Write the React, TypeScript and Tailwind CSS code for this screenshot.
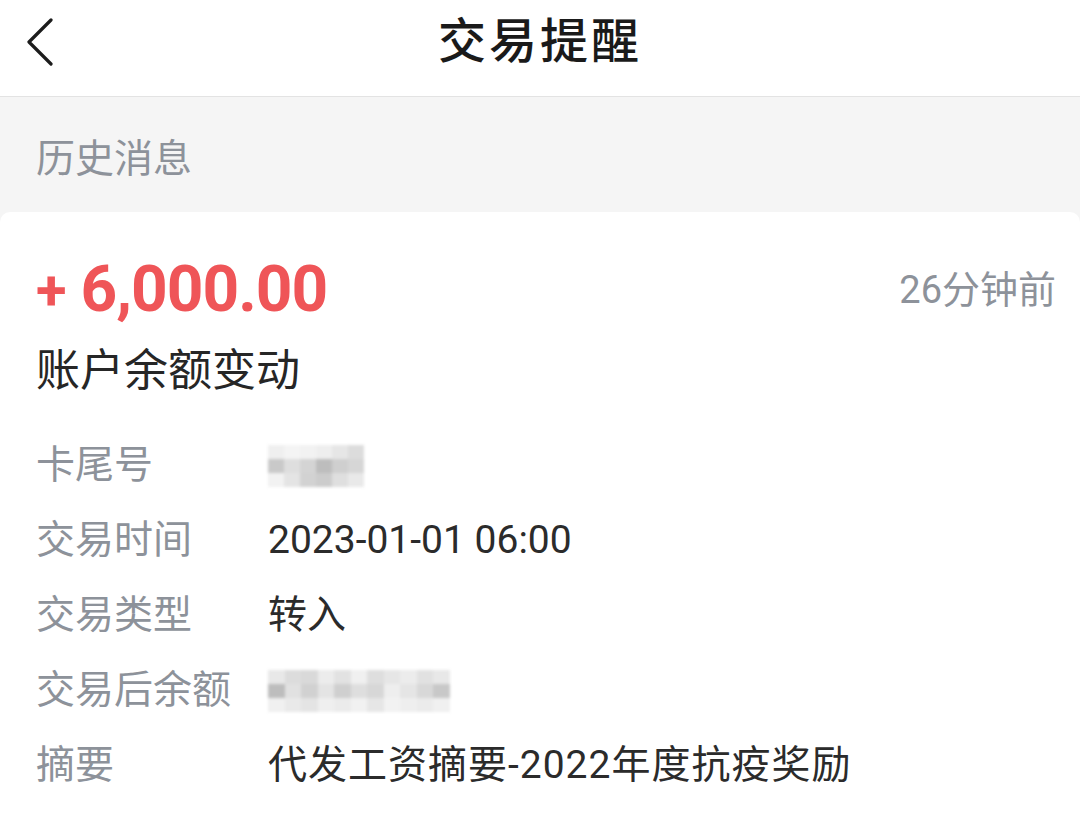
import React from "react";

const FONT = "font-['Roboto','Noto_Sans_CJK_SC',sans-serif]";

// pixelated mosaic used to hide sensitive numbers
const TAIL_BLOCKS = [
  ["#efefef", "#f4f4f4", "#f2f2f2", "#eeeeee", "#e6e6e6", "#dcdcdc"],
  ["#c9c9c9", "#dedede", "#d4d4d4", "#bdbdbd", "#cfcfcf", "#d6d6d6"],
  ["#f2f2f2", "#e4e4e4", "#d2d2d2", "#cccccc", "#dfdfdf", "#e9e9e9"],
];

const BALANCE_BLOCKS = [
  ["#e8e8e8", "#dcdcdc", "#d9d9d9", "#ececec", "#e2e2e2", "#f0f0f0", "#dedede", "#e6e6e6", "#ececec", "#e1e1e1", "#e8e8e8"],
  ["#bdbdbd", "#e1e1e1", "#d1d1d1", "#e4e4e4", "#cfcfcf", "#dedede", "#d7d7d7", "#eeeeee", "#e5e5e5", "#d8d8d8", "#c8c8c8"],
  ["#f0f0f0", "#e9e9e9", "#e4e4e4", "#efefef", "#ebebeb", "#f1f1f1", "#e6e6e6", "#f2f2f2", "#eeeeee", "#ebebeb", "#f0f0f0"],
];

function Mosaic({ blocks, cell }: { blocks: string[][]; cell: string }) {
  return (
    <div className="blur-[1.5px]">
      {blocks.map((row, i) => (
        <div key={i} className="flex">
          {row.map((c, j) => (
            <div key={j} className={cell} style={{ background: c }} />
          ))}
        </div>
      ))}
    </div>
  );
}

function Row({ label, children, wide }: { label: string; children: React.ReactNode; wide?: boolean }) {
  return (
    <div className="flex items-center h-[75px]">
      <div className="w-[232px] text-[39px] text-[#8d929a] whitespace-nowrap">{label}</div>
      <div className={`text-[39px] text-[#2b2b2b] whitespace-nowrap ${wide ? "tracking-[1px]" : ""}`}>{children}</div>
    </div>
  );
}

export default function App() {
  return (
    <div className={`w-[1080px] h-[825px] bg-white overflow-hidden ${FONT}`}>
      {/* Header */}
      <div className="relative h-[97px] flex items-center justify-center border-b border-[#e3e3e3] bg-white">
        <svg
          className="absolute left-[25px] top-[18px]"
          width="32"
          height="48"
          viewBox="0 0 32 48"
          fill="none"
        >
          <path d="M26 2 L4 24 L26 46" stroke="#1c1c1c" strokeWidth="3.2" strokeLinecap="round" strokeLinejoin="round" />
        </svg>
        <div className="text-[48px] font-medium text-[#1a1a1a] tracking-[3px] -mt-[12px]">交易提醒</div>
      </div>

      {/* History label */}
      <div className="h-[115px] bg-[#f5f5f5] flex items-center px-[36px] pt-[10px]">
        <div className="text-[39px] text-[#8d929a]">历史消息</div>
      </div>

      {/* Card */}
      <div className="bg-[#f5f5f5]">
        <div className="bg-white rounded-t-[10px] pt-[40px] px-[36px]">
          <div className="flex items-center justify-between h-[76px]">
            <div className="flex items-center text-[#ef5558] font-bold">
              <span className="text-[56px] leading-none mr-[14px]">+</span>
              <span className="text-[64px] leading-none tracking-[-1px]">6,000.00</span>
            </div>
            <div className="text-[38px] text-[#8d929a] -mr-[12px]">26分钟前</div>
          </div>
          <div className="mt-[18px] h-[50px] flex items-center text-[44px] text-[#262626]">账户余额变动</div>

          <div className="mt-[32px]">
            <Row label="卡尾号">
              <Mosaic blocks={TAIL_BLOCKS} cell="w-[16px] h-[14px]" />
            </Row>
            <Row label="交易时间">2023-01-01 06:00</Row>
            <Row label="交易类型">转入</Row>
            <Row label="交易后余额">
              <Mosaic blocks={BALANCE_BLOCKS} cell="w-[16.5px] h-[14px]" />
            </Row>
            <Row label="摘要" wide>代发工资摘要-2022年度抗疫奖励</Row>
          </div>
        </div>
      </div>
    </div>
  );
}
